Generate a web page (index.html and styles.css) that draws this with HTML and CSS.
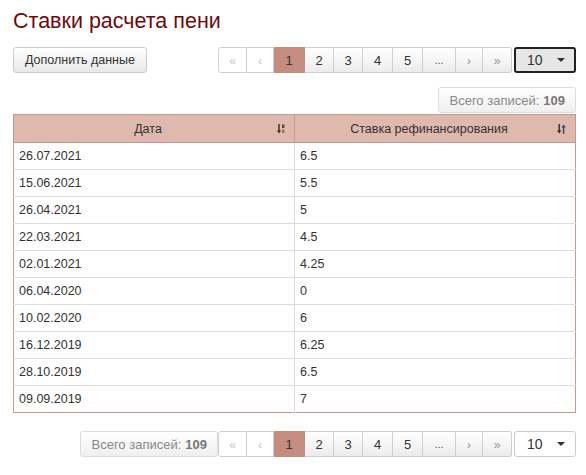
FILE: index.html
```html
<!DOCTYPE html>
<html lang="ru">
<head>
<meta charset="utf-8">
<link rel="stylesheet" href="styles.css">
</head>
<body>
<div class="page">
  <h3 class="title">Ставки расчета пени</h3>
  <div class="toolbar">
    <button class="btn">Дополнить данные</button>
    <div class="pager-group">
      <ul class="pager">
        <li class="disabled w29">«</li>
        <li class="disabled w27">‹</li>
        <li class="active w31">1</li>
        <li class="w29">2</li>
        <li class="w29">3</li>
        <li class="w30">4</li>
        <li class="w30">5</li>
        <li class="dots w33">...</li>
        <li class="arrow w27">›</li>
        <li class="arrow w29">»</li>
      </ul>
      <div class="select focused"><span>10</span><i class="caret"></i></div>
    </div>
  </div>
  <div class="total-row">
    <div class="total">Всего записей: <b>109</b></div>
  </div>
  <table class="grid">
    <thead>
      <tr>
        <th><span>Дата</span>
          <svg class="sort" width="8" height="10" viewBox="0 0 8 10"><path d="M2 0v8" stroke="#3a2a1a" stroke-width="1.4"/><path d="M0 6.5l2 3 2-3z" fill="#3a2a1a"/><rect x="5" y="0.5" width="2.5" height="3.5" fill="#5a4a3a"/><rect x="5" y="5.5" width="2.5" height="3.5" fill="#8a7a6a"/></svg>
        </th>
        <th><span>Ставка рефинансирования</span>
          <svg class="sort" width="9" height="10" viewBox="0 0 9 10"><path d="M2.2 0v8" stroke="#3a2a1a" stroke-width="1.4"/><path d="M0 6.5l2.2 3 2.2-3z" fill="#3a2a1a"/><path d="M6.6 2v8" stroke="#1f4f7a" stroke-width="1.4"/><path d="M4.4 3.5l2.2-3 2.2 3z" fill="#1f4f7a"/></svg>
        </th>
      </tr>
    </thead>
    <tbody>
      <tr><td>26.07.2021</td><td>6.5</td></tr>
      <tr><td>15.06.2021</td><td>5.5</td></tr>
      <tr><td>26.04.2021</td><td>5</td></tr>
      <tr><td>22.03.2021</td><td>4.5</td></tr>
      <tr><td>02.01.2021</td><td>4.25</td></tr>
      <tr><td>06.04.2020</td><td>0</td></tr>
      <tr><td>10.02.2020</td><td>6</td></tr>
      <tr><td>16.12.2019</td><td>6.25</td></tr>
      <tr><td>28.10.2019</td><td>6.5</td></tr>
      <tr><td>09.09.2019</td><td>7</td></tr>
    </tbody>
  </table>
  <div class="bottom">
    <div class="total">Всего записей: <b>109</b></div>
    <ul class="pager">
      <li class="disabled w29">«</li>
      <li class="disabled w27">‹</li>
      <li class="active w31">1</li>
      <li class="w29">2</li>
      <li class="w29">3</li>
      <li class="w30">4</li>
      <li class="w30">5</li>
      <li class="dots w33">...</li>
      <li class="arrow w27">›</li>
      <li class="arrow w29">»</li>
    </ul>
    <div class="select"><span>10</span><i class="caret"></i></div>
  </div>
</div>
</body>
</html>
```
FILE: styles.css
```css
* { box-sizing: border-box; }
html, body { margin: 0; padding: 0; background: #fff; }
body {
  font-family: "Liberation Sans", Arial, sans-serif;
  font-size: 12.5px;
  color: #333;
}
.page {
  width: 563px;
  margin-left: 13px;
  padding-top: 8px;
}
.title {
  margin: 0;
  font-size: 21.5px;
  font-weight: normal;
  line-height: 26px;
  color: #6e0a0a;
}
.toolbar {
  display: flex;
  justify-content: space-between;
  align-items: center;
  margin-top: 13px;
}
.btn {
  font-family: inherit;
  font-size: 12.5px;
  color: #333;
  height: 26px;
  padding: 0 11px;
  border: 1px solid #ccc;
  border-radius: 3px;
  background: linear-gradient(#fff, #e8e8e8);
}
.pager-group { display: flex; align-items: center; gap: 2px; }
.pager {
  display: flex;
  list-style: none;
  margin: 0;
  padding: 0;
}
.pager li {
  height: 26px;
  display: flex;
  align-items: center;
  justify-content: center;
  border: 1px solid #d0d0d0;
  border-left: none;
  background: linear-gradient(#fff, #ececec);
  color: #333;
  font-size: 13px;
}
.pager li:first-child { border-left: 1px solid #d0d0d0; border-radius: 3px 0 0 3px; }
.pager li:last-child { border-radius: 0 3px 3px 0; }
.pager .w27 { width: 27px; }
.pager .w29 { width: 29px; }
.pager .w30 { width: 30px; }
.pager .w31 { width: 31px; }
.pager .w33 { width: 33px; }
.pager li.disabled { background: #fff; color: #c8c8c8; }
.pager li.active { background: #c58d80; border-color: #c58d80; color: #333; }
.pager li.dots { font-size: 11px; color: #555; }
.pager li.arrow { color: #999; }
.select {
  width: 62px;
  height: 26px;
  display: flex;
  align-items: center;
  justify-content: space-between;
  padding: 0 10px 0 12px;
  border: 1px solid #ccc;
  border-radius: 3px;
  background: #fff;
  font-size: 14px;
  color: #333;
}
.select.focused {
  border: 2px solid #222;
  background: #e6e6e6;
  padding: 0 9px 0 11px;
}
.caret {
  width: 0; height: 0;
  border-left: 4px solid transparent;
  border-right: 4px solid transparent;
  border-top: 4px solid #333;
}
.total-row { display: flex; justify-content: flex-end; margin-top: 14px; }
.total {
  height: 26px;
  padding: 0 10px 0 11px;
  display: flex;
  align-items: center;
  border: 1px solid #ddd;
  border-radius: 3px;
  background: linear-gradient(#fff, #efefef);
  color: #888;
  font-size: 13px;
}
.total b { margin-left: 4px; color: #777; }
.grid {
  width: 100%;
  border-collapse: collapse;
  margin-top: 1px;
  border: 1px solid #c49a90;
}
.grid th {
  position: relative;
  height: 28px;
  padding: 0 12px 0 0;
  background: #dfb8ae;
  border: 1px solid #c49a90;
  font-weight: normal;
  text-align: center;
  color: #333;
  width: 50%;
}
.grid th .sort { position: absolute; right: 9px; top: 9px; }
.grid td {
  height: 27px;
  padding: 0 5px;
  border-top: 1px solid #ddd;
  border-left: 1px solid #ddd;
}
.grid td:first-child { border-left: none; }
.bottom {
  display: flex;
  justify-content: flex-end;
  align-items: center;
  margin-top: 18px;
}
.bottom .pager { margin-right: 2px; }
```
